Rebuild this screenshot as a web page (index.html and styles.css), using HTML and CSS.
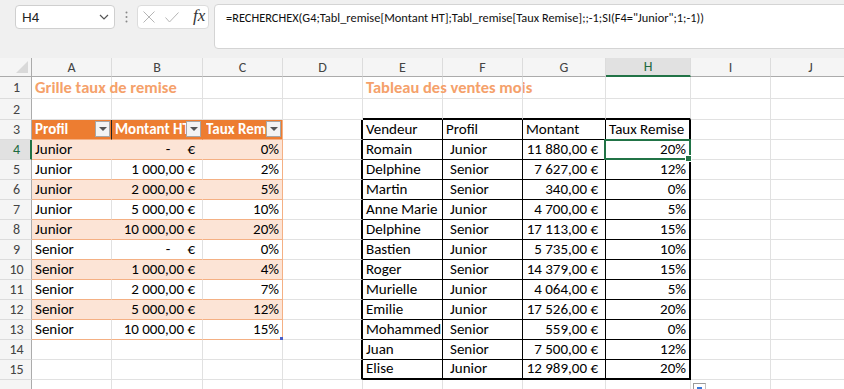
FILE: index.html
```html
<!DOCTYPE html>
<html lang="fr">

<head>
    <meta charset="UTF-8">
    <meta name="viewport" content="width=device-width, initial-scale=1.0">
    <title>Remises</title>
    <link rel="stylesheet" href="styles.css">
</head>

<body>

    <!-- Formula bar -->
    <div class="toolbar">
        <div class="namebox">
            <span>H4</span>
            <svg width="10" height="6" viewBox="0 0 10 6"><path d="M1 1 L5 5 L9 1" fill="none" stroke="#555" stroke-width="1.2"/></svg>
        </div>
        <div class="grip">
            <svg width="3" height="12" viewBox="0 0 3 12"><circle cx="1.5" cy="1.5" r="1" fill="#888"/><circle cx="1.5" cy="6" r="1" fill="#888"/><circle cx="1.5" cy="10.5" r="1" fill="#888"/></svg>
        </div>
        <div class="fxbox">
            <svg width="12" height="12" viewBox="0 0 12 12"><path d="M0.5 0.5 L11.5 11.5 M11.5 0.5 L0.5 11.5" stroke="#b5b5b5" stroke-width="1"/></svg>
            <svg width="14" height="11" viewBox="0 0 14 11"><path d="M0.5 5.5 L4.5 10 L13.5 0.5" fill="none" stroke="#b5b5b5" stroke-width="1"/></svg>
            <span class="fx">fx</span>
        </div>
        <div class="formula">=RECHERCHEX(G4;Tabl_remise[Montant HT];Tabl_remise[Taux Remise];;-1;SI(F4="Junior";1;-1))</div>
    </div>

    <!-- Sheet -->
    <div class="sheet">
        <!-- column headers -->
        <div class="corner"><svg width="12" height="12" viewBox="0 0 12 12"><path d="M12 0 L12 12 L0 12 Z" fill="#d9d9d9"/></svg></div>
        <div class="colhead">A</div>
        <div class="colhead">B</div>
        <div class="colhead">C</div>
        <div class="colhead">D</div>
        <div class="colhead">E</div>
        <div class="colhead">F</div>
        <div class="colhead">G</div>
        <div class="colhead active">H</div>
        <div class="colhead">I</div>
        <div class="colhead">J</div>

        <!-- row 1 -->
        <div class="rowhead">1</div>
        <div class="cell title">Grille taux de remise</div>
        <div class="cell"></div>
        <div class="cell"></div>
        <div class="cell"></div>
        <div class="cell title">Tableau des ventes mois</div>
        <div class="cell"></div>
        <div class="cell"></div>
        <div class="cell"></div>
        <div class="cell"></div>
        <div class="cell"></div>

        <!-- row 2 -->
        <div class="rowhead">2</div>
        <div class="cell"></div>
        <div class="cell"></div>
        <div class="cell"></div>
        <div class="cell"></div>
        <div class="cell top-edge"></div>
        <div class="cell top-edge"></div>
        <div class="cell top-edge"></div>
        <div class="cell top-edge"></div>
        <div class="cell"></div>
        <div class="cell"></div>

        <!-- row 3 -->
        <div class="rowhead">3</div>
        <div class="cell thead cursor-line"><span>Profil</span><i class="filter"></i></div>
        <div class="cell thead"><span>Montant HT</span><i class="filter"></i></div>
        <div class="cell thead last"><span>Taux Remise</span><i class="filter"></i></div>
        <div class="cell left-edge"></div>
        <div class="cell bx">Vendeur</div>
        <div class="cell bx">Profil</div>
        <div class="cell bx">Montant</div>
        <div class="cell bx right-edge">Taux Remise</div>
        <div class="cell"></div>
        <div class="cell"></div>

        <!-- row 4 -->
        <div class="rowhead active">4</div>
        <div class="cell band">Junior</div>
        <div class="cell band num"><span class="dash">-</span>€</div>
        <div class="cell band pct last">0%</div>
        <div class="cell left-edge"></div>
        <div class="cell bx">Romain</div>
        <div class="cell bx ind">Junior</div>
        <div class="cell bx num">11 880,00 €</div>
        <div class="cell bx pct right-edge selected">20%</div>
        <div class="cell"></div>
        <div class="cell"></div>

        <!-- row 5 -->
        <div class="rowhead">5</div>
        <div class="cell plain">Junior</div>
        <div class="cell plain num">1 000,00 €</div>
        <div class="cell plain pct last">2%</div>
        <div class="cell left-edge"></div>
        <div class="cell bx">Delphine</div>
        <div class="cell bx ind">Senior</div>
        <div class="cell bx num">7 627,00 €</div>
        <div class="cell bx pct right-edge">12%</div>
        <div class="cell"></div>
        <div class="cell"></div>

        <!-- row 6 -->
        <div class="rowhead">6</div>
        <div class="cell band">Junior</div>
        <div class="cell band num">2 000,00 €</div>
        <div class="cell band pct last">5%</div>
        <div class="cell left-edge"></div>
        <div class="cell bx">Martin</div>
        <div class="cell bx ind">Senior</div>
        <div class="cell bx num">340,00 €</div>
        <div class="cell bx pct right-edge">0%</div>
        <div class="cell"></div>
        <div class="cell"></div>

        <!-- row 7 -->
        <div class="rowhead">7</div>
        <div class="cell plain">Junior</div>
        <div class="cell plain num">5 000,00 €</div>
        <div class="cell plain pct last">10%</div>
        <div class="cell left-edge"></div>
        <div class="cell bx">Anne Marie</div>
        <div class="cell bx ind">Junior</div>
        <div class="cell bx num">4 700,00 €</div>
        <div class="cell bx pct right-edge">5%</div>
        <div class="cell"></div>
        <div class="cell"></div>

        <!-- row 8 -->
        <div class="rowhead">8</div>
        <div class="cell band">Junior</div>
        <div class="cell band num">10 000,00 €</div>
        <div class="cell band pct last">20%</div>
        <div class="cell left-edge"></div>
        <div class="cell bx">Delphine</div>
        <div class="cell bx ind">Senior</div>
        <div class="cell bx num">17 113,00 €</div>
        <div class="cell bx pct right-edge">15%</div>
        <div class="cell"></div>
        <div class="cell"></div>

        <!-- row 9 -->
        <div class="rowhead">9</div>
        <div class="cell plain">Senior</div>
        <div class="cell plain num"><span class="dash">-</span>€</div>
        <div class="cell plain pct last">0%</div>
        <div class="cell left-edge"></div>
        <div class="cell bx">Bastien</div>
        <div class="cell bx ind">Junior</div>
        <div class="cell bx num">5 735,00 €</div>
        <div class="cell bx pct right-edge">10%</div>
        <div class="cell"></div>
        <div class="cell"></div>

        <!-- row 10 -->
        <div class="rowhead">10</div>
        <div class="cell band">Senior</div>
        <div class="cell band num">1 000,00 €</div>
        <div class="cell band pct last">4%</div>
        <div class="cell left-edge"></div>
        <div class="cell bx">Roger</div>
        <div class="cell bx ind">Senior</div>
        <div class="cell bx num">14 379,00 €</div>
        <div class="cell bx pct right-edge">15%</div>
        <div class="cell"></div>
        <div class="cell"></div>

        <!-- row 11 -->
        <div class="rowhead">11</div>
        <div class="cell plain">Senior</div>
        <div class="cell plain num">2 000,00 €</div>
        <div class="cell plain pct last">7%</div>
        <div class="cell left-edge"></div>
        <div class="cell bx">Murielle</div>
        <div class="cell bx ind">Junior</div>
        <div class="cell bx num">4 064,00 €</div>
        <div class="cell bx pct right-edge">5%</div>
        <div class="cell"></div>
        <div class="cell"></div>

        <!-- row 12 -->
        <div class="rowhead">12</div>
        <div class="cell band">Senior</div>
        <div class="cell band num">5 000,00 €</div>
        <div class="cell band pct last">12%</div>
        <div class="cell left-edge"></div>
        <div class="cell bx">Emilie</div>
        <div class="cell bx ind">Junior</div>
        <div class="cell bx num">17 526,00 €</div>
        <div class="cell bx pct right-edge">20%</div>
        <div class="cell"></div>
        <div class="cell"></div>

        <!-- row 13 -->
        <div class="rowhead">13</div>
        <div class="cell plain">Senior</div>
        <div class="cell plain num">10 000,00 €</div>
        <div class="cell plain pct last resize">15%</div>
        <div class="cell left-edge"></div>
        <div class="cell bx">Mohammed</div>
        <div class="cell bx ind">Senior</div>
        <div class="cell bx num">559,00 €</div>
        <div class="cell bx pct right-edge">0%</div>
        <div class="cell"></div>
        <div class="cell"></div>

        <!-- row 14 -->
        <div class="rowhead">14</div>
        <div class="cell"></div>
        <div class="cell"></div>
        <div class="cell"></div>
        <div class="cell left-edge"></div>
        <div class="cell bx">Juan</div>
        <div class="cell bx ind">Senior</div>
        <div class="cell bx num">7 500,00 €</div>
        <div class="cell bx pct right-edge">12%</div>
        <div class="cell"></div>
        <div class="cell"></div>

        <!-- row 15 -->
        <div class="rowhead">15</div>
        <div class="cell"></div>
        <div class="cell"></div>
        <div class="cell"></div>
        <div class="cell left-edge"></div>
        <div class="cell bx bottom-edge">Elise</div>
        <div class="cell bx bottom-edge ind">Junior</div>
        <div class="cell bx bottom-edge num">12 989,00 €</div>
        <div class="cell bx bottom-edge pct right-edge">20%</div>
        <div class="cell"></div>
        <div class="cell"></div>

        <!-- row 16 (partly visible) -->
        <div class="rowhead"></div>
        <div class="cell"></div>
        <div class="cell"></div>
        <div class="cell"></div>
        <div class="cell"></div>
        <div class="cell"></div>
        <div class="cell"></div>
        <div class="cell"></div>
        <div class="cell quick"></div>
        <div class="cell"></div>
        <div class="cell"></div>
    </div>

</body>

</html>
```

FILE: styles.css
```css
body {
    margin: 0;
    padding: 0;
    width: 844px;
    height: 389px;
    overflow: hidden;
    background-color: #ffffff;
    font-family: Calibri, Carlito, 'Lato', sans-serif;
    font-size: 15px;
    color: #000000;
}

/* ---------- formula bar ---------- */

.toolbar {
    height: 58px;
    box-sizing: border-box;
    background-color: #f0f0f0;
    display: flex;
    align-items: flex-start;
    padding: 4px 0 0 15px;
}

.namebox {
    width: 100px;
    height: 24px;
    margin-top: 1px;
    box-sizing: border-box;
    background-color: #ffffff;
    border: 1px solid #cfcfcf;
    border-radius: 4px;
    display: flex;
    align-items: center;
    justify-content: space-between;
    padding: 0 5px 0 6px;
    font-family: 'Liberation Sans', sans-serif;
    font-size: 13.5px;
    color: #222;
}

.grip {
    width: 22px;
    height: 26px;
    display: flex;
    align-items: center;
    justify-content: center;
}

.fxbox {
    width: 72px;
    height: 24px;
    margin-top: 1px;
    box-sizing: border-box;
    background-color: #ffffff;
    border: 1px solid #dcdcdc;
    border-radius: 4px;
    display: flex;
    align-items: center;
    gap: 10px;
    padding-left: 5px;
}

.fx {
    font-family: 'Liberation Serif', serif;
    font-style: italic;
    font-size: 17px;
    color: #333;
    margin-left: 4px;
    margin-top: -2px;
}

.formula {
    flex: 1;
    height: 45px;
    margin-left: 5px;
    margin-right: -6px;
    box-sizing: border-box;
    background-color: #ffffff;
    border: 1px solid #d4d4d4;
    border-radius: 4px;
    padding: 5px 0 0 11px;
    font-size: 12.4px;
    color: #111;
    white-space: nowrap;
}

/* ---------- grid ---------- */

.sheet {
    display: grid;
    grid-template-columns: 32px 80px 91px 80px 80px 80px 80px 83px 85px 80px 80px;
    grid-template-rows: 19px 22px 21px repeat(14, 20px);
}

.corner,
.colhead,
.rowhead {
    background-color: #f5f5f5;
    color: #444;
    box-sizing: border-box;
    display: flex;
    align-items: center;
    justify-content: center;
    font-size: 14px;
}

.corner {
    border-right: 1px solid #ababab;
    border-bottom: 1px solid #ababab;
    justify-content: flex-end;
    align-items: flex-end;
    padding: 0 3px 3px 0;
}

.colhead {
    border-right: 1px solid #dcdcdc;
    border-bottom: 1px solid #ababab;
}

.colhead.active {
    background-color: #e1e1e1;
    color: #1e6b41;
    border-bottom: 2px solid #217346;
}

.rowhead {
    border-right: 1px solid #ababab;
    border-bottom: 1px solid #dcdcdc;
    padding-left: 2px;
}

.rowhead.active {
    background-color: #e1e1e1;
    color: #1e6b41;
    border-right: 2px solid #217346;
    padding-left: 3px;
}

.cell {
    box-sizing: border-box;
    border-right: 1px solid #e1e1e1;
    border-bottom: 1px solid #e1e1e1;
    display: flex;
    align-items: flex-end;
    padding: 0 3px 1px 3px;
    white-space: nowrap;
    min-width: 0;
}

.title {
    font-weight: bold;
    font-size: 16.5px;
    color: #f5a16b;
    overflow: visible;
}

/* left table (Excel table style) */

.thead {
    background-color: #ed7d31;
    border-right-color: #ed7d31;
    border-bottom-color: #f4b084;
    color: #ffffff;
    font-weight: bold;
    align-items: center;
    padding-right: 1px;
}

.thead span {
    flex: 1;
    min-width: 0;
    overflow: hidden;
}

.thead.cursor-line {
    border-right-color: #222;
}

.filter {
    flex: none;
    width: 15px;
    height: 16px;
    box-sizing: border-box;
    background-color: #f3f3f3;
    border: 1px solid #a6a6a6;
    display: flex;
    align-items: center;
    justify-content: center;
}

.filter::after {
    content: "";
    border-left: 4px solid transparent;
    border-right: 4px solid transparent;
    border-top: 4px solid #555;
}

.band {
    background-color: #fce4d6;
    border-right-color: #fce4d6;
    border-bottom-color: #f4b084;
}

.plain {
    border-bottom-color: #f4b084;
}

.last {
    border-right-color: #f4b084;
}

.num {
    justify-content: flex-end;
    padding-right: 7px;
}

.dash {
    margin-right: 17px;
}

.pct {
    justify-content: flex-end;
    padding-right: 3px;
}

.resize {
    position: relative;
}

.resize::after {
    content: "";
    position: absolute;
    right: -1px;
    bottom: -1px;
    width: 3px;
    height: 3px;
    background-color: #4a5fc7;
}

/* right table (black borders) */

.bx {
    border-right-color: #000;
    border-bottom-color: #000;
}

.ind {
    padding-left: 7px;
}

.top-edge {
    border-bottom: 2px solid #000;
}

.left-edge {
    border-right: 2px solid #000;
}

.right-edge {
    border-right: 2px solid #000;
}

.bottom-edge {
    border-bottom: 2px solid #000;
}

.selected {
    position: relative;
}

.selected::before {
    content: "";
    position: absolute;
    left: -2px;
    top: -1px;
    right: -2px;
    bottom: -1px;
    border: 2px solid #217346;
}

.selected::after {
    content: "";
    position: absolute;
    right: -3px;
    bottom: -3px;
    width: 5px;
    height: 5px;
    background-color: #217346;
    border: 1px solid #ffffff;
}

.quick {
    position: relative;
}

.quick::after {
    content: "";
    position: absolute;
    left: 87px;
    top: 3px;
    width: 13px;
    height: 12px;
    box-sizing: border-box;
    border: 1px solid #9a9a9a;
    border-right-color: #c0c0c0;
    background: linear-gradient(#3a78d8, #3a78d8) 3px 3px / 5px 6px no-repeat, #ffffff;
}
```
